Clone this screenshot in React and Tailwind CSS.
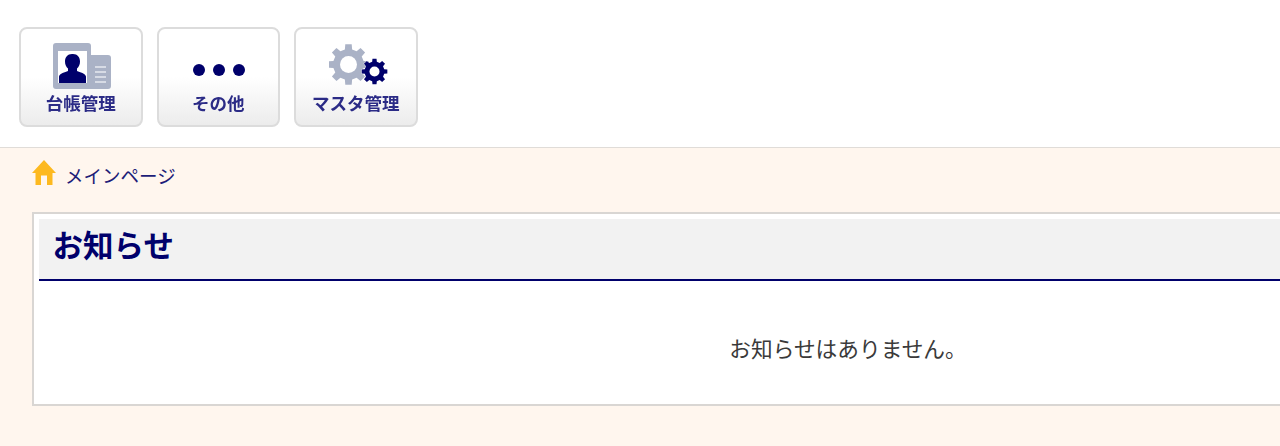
import React from "react";

function Btn({ children, label, iconClass }) {
  return (
    <div className="w-[123.5px] h-[100px] shrink-0 rounded-[8px] border-2 border-[#dcdcdc] bg-gradient-to-b from-white from-50% to-[#ececec] flex flex-col items-center">
      <div className={"h-[60px] w-full flex justify-center " + iconClass}>{children}</div>
      <div className="text-[17.5px] leading-[22px] font-bold text-[#2b2b86] mt-[3px] whitespace-nowrap blur-[0.4px]">{label}</div>
    </div>
  );
}

function Card() {
  return (
    <svg width="60" height="48" viewBox="0 0 60 48">
      <rect x="30" y="12" width="28" height="34" rx="3" fill="#aab2c6" />
      <path d="M42 24h11M42 29h11M42 34h11M42 39h11" stroke="#e6e9ef" strokeWidth="1.500" />
      <rect x="0" y="0" width="38" height="46" rx="3" fill="#aab2c6" />
      <rect x="5" y="8" width="29" height="32" fill="#fff" />
      <path d="M19 11c-4.500 0-7 3.300-7 7.600 0 3 1.200 5.400 3 7v2.400c-3 1.600-8.500 2.200-9 5.500V40h27v-6.500c-.5-3.300-6-3.900-9-5.500v-2.400c1.800-1.600 3-4 3-7 0-4.300-2.500-7.600-7-7.600z" fill="#00006b" />
    </svg>
  );
}

function Dots() {
  return (
    <svg width="54" height="16" viewBox="0 0 54 16">
      <circle cx="7" cy="8" r="6" fill="#00006b" />
      <circle cx="27" cy="8" r="6" fill="#00006b" />
      <circle cx="47" cy="8" r="6" fill="#00006b" />
    </svg>
  );
}

function gearPath(cx, cy, rOut, rIn, n) {
  const pts = [];
  const step = (Math.PI * 2) / n;
  const p = (r, t) => `${(cx + r * Math.cos(t)).toFixed(2)} ${(cy + r * Math.sin(t)).toFixed(2)}`;
  for (let i = 0; i < n; i++) {
    const a = i * step - Math.PI / 2;
    pts.push(p(rIn, a - step * 0.3), p(rOut, a - step * 0.2), p(rOut, a + step * 0.2), p(rIn, a + step * 0.3));
  }
  return "M" + pts.join("L") + "Z";
}

function Gears() {
  return (
    <svg width="60" height="46" viewBox="0 0 60 46">
      <path d={gearPath(19.500, 21.500, 20.500, 15.500, 8)} fill="#aab2c6" />
      <circle cx="19.500" cy="21.500" r="8.500" fill="#fff" />
      <path d={gearPath(45.500, 28.500, 13, 10, 8)} fill="#00006b" stroke="#fff" strokeWidth="1" paintOrder="stroke" />
      <circle cx="45.500" cy="28.500" r="5" fill="#fff" />
    </svg>
  );
}

function Home() {
  return (
    <svg width="24" height="25" viewBox="0 0 24 25">
      <path d="M12 0 L24 13 H20.500 V25 H15 V15.500 H9 V25 H3.500 V13 H0 Z" fill="#fdb91f" />
    </svg>
  );
}

export default function App() {
  return (
    <div className="h-[446px] w-[1280px] overflow-hidden bg-[#fff6ee] font-['Noto_Sans_CJK_JP','Liberation_Sans',sans-serif]">
      <div className="h-[148px] bg-white border-b border-[#e0dcd8] flex items-start gap-[14px] pl-[19px] pt-[27px]">
        <Btn label="台帳管理" iconClass="items-start pt-[14px] pl-[4px]"><Card /></Btn>
        <Btn label="その他" iconClass="items-start pt-[33px] pl-[2px]"><Dots /></Btn>
        <Btn label="マスタ管理" iconClass="items-start pt-[14px] pl-[6px]"><Gears /></Btn>
      </div>
      <div className="flex items-start gap-[9px] pl-[32px] pt-[12px] h-[52px]">
        <Home />
        <span className="text-[18.5px] leading-[30px] text-[#1d1d78] whitespace-nowrap">メインページ</span>
      </div>
      <div className="ml-[32px] mt-[12px] w-[1632px] h-[194px] bg-white border-2 border-[#d9d6d3] pt-[5px] px-[5px]">
        <h2 className="h-[62px] bg-[#f2f2f2] border-b-2 border-[#00006b] pl-[13.5px] text-[30.5px] leading-[51px] font-bold text-[#00006b]">お知らせ</h2>
        <p className="mt-[51.5px] text-center text-[21.7px] leading-[30px] text-[#3a3a3a]">お知らせはありません。</p>
      </div>
    </div>
  );
}
